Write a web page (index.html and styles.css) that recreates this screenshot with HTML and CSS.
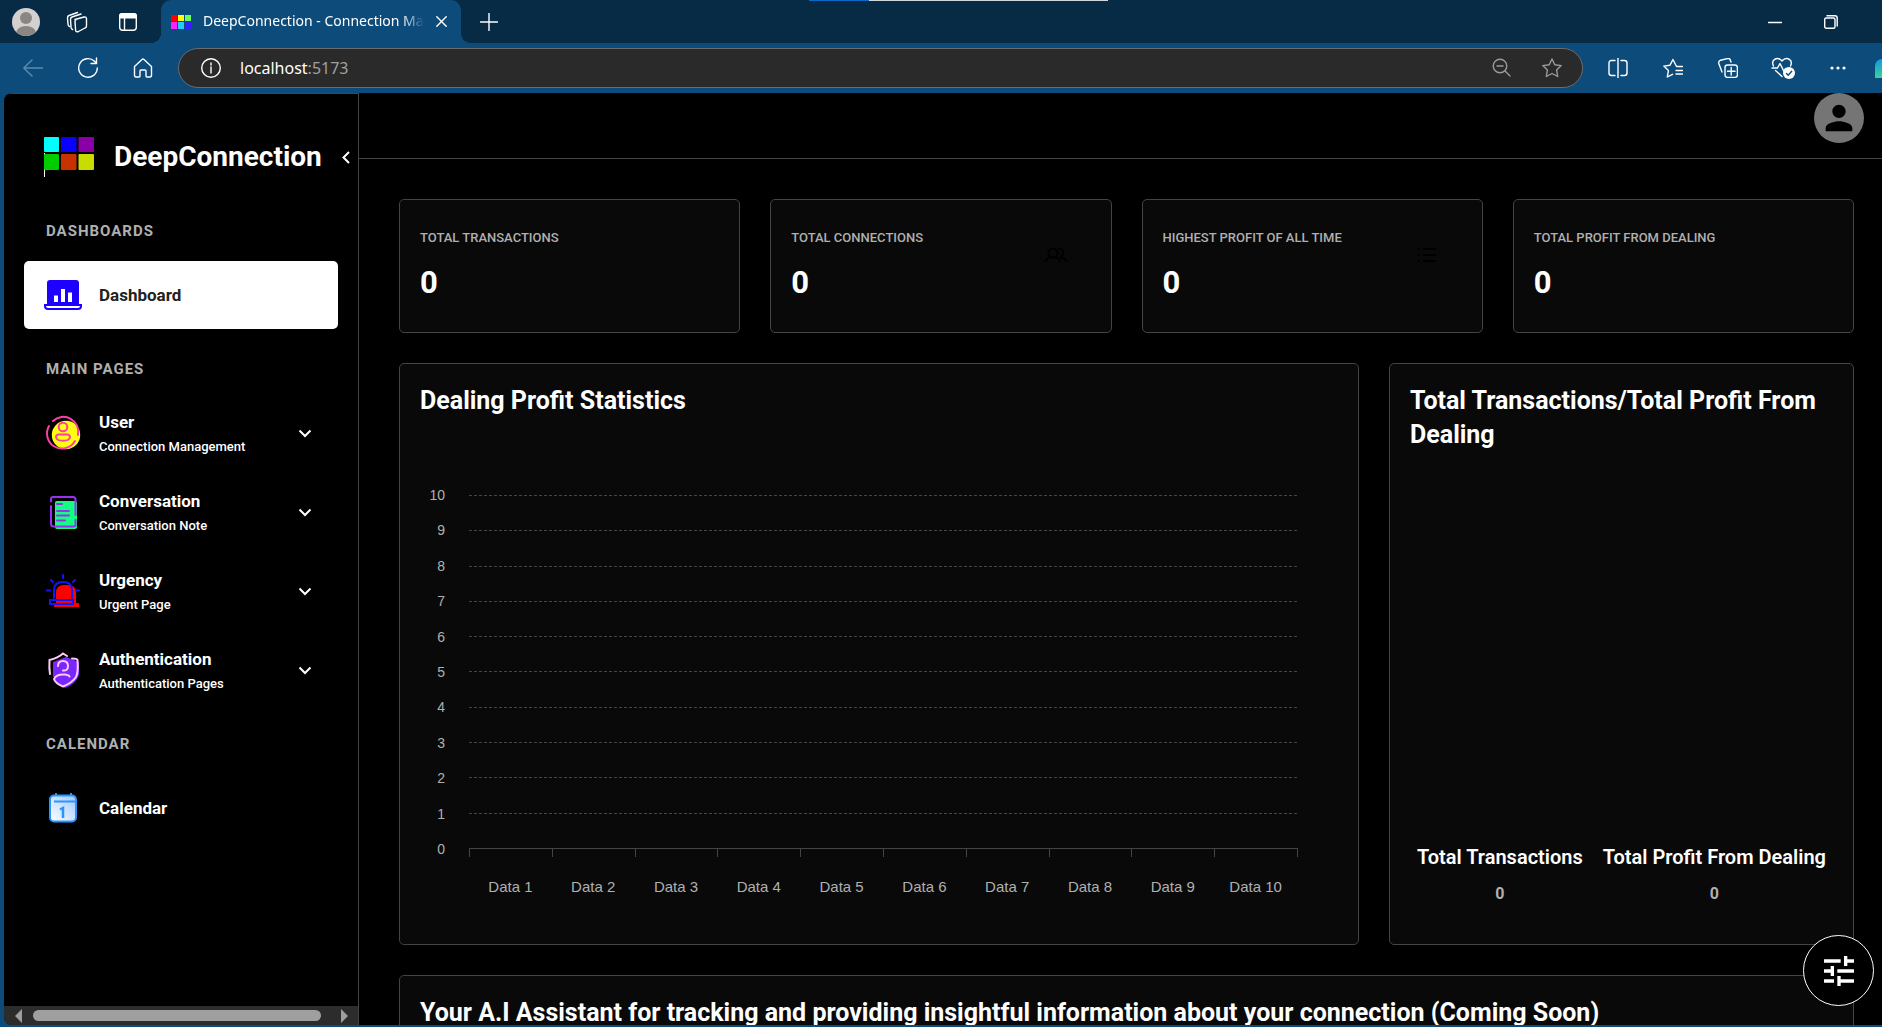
FILE: index.html
```html
<!DOCTYPE html>
<html lang="en">
<head>
<meta charset="utf-8">
<title>DeepConnection - Connection Management</title>
<link rel="stylesheet" href="styles.css">
</head>
<body>
<header class="browser">
  <div class="titlebar">
    <button class="tool" aria-label="Profile"><svg width="28" height="28" viewBox="0 0 28 28"><defs><clipPath id="pc"><circle cx="14" cy="14" r="14"/></clipPath></defs><g clip-path="url(#pc)"><rect width="28" height="28" fill="#d3d1cf"/><circle cx="14" cy="10" r="6" fill="#8a8684"/><ellipse cx="14" cy="25" rx="10" ry="7" fill="#8a8684"/></g></svg></button>
    <button class="tool" aria-label="Workspaces"><svg class="line" width="22" height="22" viewBox="0 0 22 22"><path d="M9 8.500l9-2.500q2.500-.4 2.500 2v7q0 1.500-1.500 2l-6.500 3.500q-2.500 1-2.900-1.200L9 10.500q-.2-1.500 1.200-2zM6.500 18.500Q5 18 5 16L4.500 8.500q0-2 1.500-2.500l9-3M3.500 15.500Q2 15 2 13l-.5-6q0-2 1.500-2.500l8.500-3"/></svg></button>
    <button class="tool" aria-label="Tab actions"><svg width="20" height="20" viewBox="0 0 20 20"><rect x="1.700" y="1.700" width="16.600" height="16.600" rx="3" fill="none" stroke="#fff" stroke-width="1.400"/><path d="M1 6.500V4q0-3 3-3h12q3 0 3 3v2.500z" fill="#fff"/><path d="M6.500 6v12" stroke="#fff" stroke-width="1.400"/></svg></button>
    <div class="tab">
      <svg width="20" height="14" viewBox="0 0 20 14"><path fill="#f00" d="M0 0h6v6H0z"/><path fill="#ff0" d="M7 0h6v6H7z"/><path fill="#6f5" d="M14 0h6v6h-6z"/><path fill="#f2f" d="M0 7h6v7H0z"/><path fill="#2cf" d="M7 7h6v7H7z"/><path fill="#32f" d="M14 7h6v7h-6z"/></svg>
      <span class="tab-title">DeepConnection - Connection Management</span>
      <button class="close" aria-label="Close tab"><svg class="line" width="11" height="11" viewBox="0 0 11 11"><path d="M.8.8l9.400 9.400M10.200.8L.8 10.200"/></svg></button>
    </div>
    <button class="tool new-tab" aria-label="New tab"><svg class="line" width="18" height="18" viewBox="0 0 18 18"><path d="M9 .5v17M.5 9h17"/></svg></button>
    <div class="window-buttons">
      <button class="tool" aria-label="Minimize"><svg class="line" width="14" height="14" viewBox="0 0 14 14"><path d="M.5 7.500h13"/></svg></button>
      <button class="tool" aria-label="Restore"><svg class="line" width="14" height="14" viewBox="0 0 14 14"><rect x=".7" y="3" width="10.300" height="10.300" rx="1.500"/><path d="M3 .8h8q2.200 0 2.200 2.200v8"/></svg></button>
    </div>
    <span class="load-line"></span>
  </div>
  <div class="toolbar">
    <button class="tool dim" aria-label="Back"><svg class="line" width="20" height="18" viewBox="0 0 20 18"><path d="M19.500 9H.8M9 1L.8 9 9 17"/></svg></button>
    <button class="tool" aria-label="Refresh"><svg class="line" width="22" height="22" viewBox="0 0 22 22"><path d="M20.300 11A9.300 9.300 0 1 1 17.500 4.300L19 6M19.500 1v5.500H14"/></svg></button>
    <button class="tool" aria-label="Home"><svg class="line" width="20" height="20" viewBox="0 0 20 20"><path d="M1.500 8.500L9 1.500q1-.9 2 0l7.500 7V17q0 2-1.500 2h-3q-1 0-1-1v-5q0-1-1-1H8q-1 0-1 1v5q0 1-1 1H3q-1.500 0-1.500-2z"/></svg></button>
    <div class="address">
      <svg class="line" width="20" height="20" viewBox="0 0 20 20"><circle cx="10" cy="10" r="9.300"/><path d="M10 9v6M10 5v2"/></svg>
      <span class="url">localhost<span class="port">:5173</span></span>
      <button class="tool gray" aria-label="Zoom"><svg class="line" width="20" height="20" viewBox="0 0 20 20"><circle cx="8" cy="8" r="6.800"/><path d="M13 13l5 5M5 8h6"/></svg></button>
      <button class="tool gray" aria-label="Favorite"><svg class="line" width="20" height="20" viewBox="0 0 20 20"><path d="M10 1l2.800 5.700 6.400.9-4.600 4.500 1.100 6.400-5.700-3-5.700 3 1.100-6.400L.8 7.600l6.400-.9z"/></svg></button>
    </div>
    <button class="tool" aria-label="Split screen"><svg class="line" width="20" height="20" viewBox="0 0 20 20"><path d="M10 0v20M7 2.500H3.500Q1 2.500 1 5v10q0 2.500 2.500 2.500H7M13 2.500h3.500Q19 2.500 19 5v10q0 2.500-2.500 2.500H13"/></svg></button>
    <button class="tool" aria-label="Favorites"><svg class="line" width="20" height="20" viewBox="0 0 20 20"><path d="M19.500 8.500h-6l-3.500-7-3 5.700-6.200.9 4.600 4.500-1.100 6.400 5.200-2.700M13 12.500h6.500M13 16h6.500"/></svg></button>
    <button class="tool" aria-label="Collections"><svg class="line" width="20" height="20" viewBox="0 0 20 20"><rect x="7" y="7" width="12.400" height="12.400" rx="2.500"/><path d="M13.200 9.500v7.500M9.500 13.200h7.500M4 14L.8 5.500Q.3 3 2.500 2.200l7-1.600q2.500-.4 3 1.900l.5 1.500"/></svg></button>
    <button class="tool" aria-label="Browser essentials"><svg class="line" width="24" height="22" viewBox="0 0 24 22"><path d="M2.500 9C-.5 3 6-.5 10 3l1 1 1-1c4-3.500 10.500 0 7.500 6M1 11h5.500l2.500-4.500 4 8 1.500-3M4.500 13.500l6.500 6"/><circle cx="18" cy="16" r="6" fill="#fff" stroke="none"/><path d="M15.500 16.500l1.700 1.700 3.500-4" stroke="#0d4b7b"/></svg></button>
    <button class="tool" aria-label="Settings and more"><svg width="16" height="4" viewBox="0 0 16 4" fill="#fff"><circle cx="2" cy="2" r="1.600"/><circle cx="8" cy="2" r="1.600"/><circle cx="14" cy="2" r="1.600"/></svg></button>
    <button class="copilot" aria-label="Copilot"></button>
  </div>
</header>

<div class="app">
  <aside class="sidebar">
    <div class="brand">
      <svg width="50" height="40" viewBox="0 0 50 40"><path fill="#fff" d="M0 16h1v24H0z"/><rect width="15" height="15" rx="1" fill="#0ff"/><rect x="17" width="15.500" height="15" rx="1" fill="#0a00ff"/><rect x="34.500" width="15.500" height="15" rx="1" fill="#8a00a6"/><rect y="17" width="15" height="16" rx="1" fill="#0c0"/><rect x="17" y="17" width="15.500" height="16" rx="1" fill="#c83200"/><rect x="34.500" y="17" width="15.500" height="16" rx="1" fill="#c8dc00"/></svg>
      <span class="brand-name">DeepConnection</span>
      <button class="collapse" aria-label="Collapse sidebar"><svg width="8" height="13" viewBox="0 0 8 13"><path d="M7 1L1.500 6.500 7 12" fill="none" stroke="#fff" stroke-width="2"/></svg></button>
    </div>
    <nav class="nav">
      <section>
        <h2>Dashboards</h2>
        <a class="item active" href="#"><svg width="38" height="30" viewBox="0 0 38 30"><rect x="3" width="32" height="26" rx="3" fill="#1e00ff"/><path d="M1 25h36v1q0 3-3 3H4q-3 0-3-3z" fill="#fff" stroke="#1e00ff" stroke-width="2"/><path d="M10 15.500h4V22h-4zM17 9h4v13h-4zM24 12.500h4V22h-4z" fill="#fff"/></svg><span class="name">Dashboard</span></a>
      </section>
      <section>
        <h2>Main Pages</h2>
        <a class="item" href="#"><svg width="38" height="38" viewBox="0 0 38 38"><circle cx="22" cy="21" r="14.200" fill="#ffff14"/><g fill="none" stroke="#ff3fa8" stroke-width="2" stroke-linecap="round"><path d="M9 7A15 15 0 0 1 34 21M31 27A15 15 0 0 1 5 12"/><circle cx="19" cy="13" r="4.300"/><path d="M14.500 20.500h9Q26 21 26 23c-.5 5-13.500 5-14 0q0-2 2.500-2.500z"/></g></svg><span class="label"><span class="name">User</span><span class="sub">Connection Management</span></span><svg class="chevron" width="14" height="9" viewBox="0 0 14 9"><path d="M1.500 1.500L7 7l5.500-5.500"/></svg></a>
        <a class="item" href="#"><svg width="38" height="38" viewBox="0 0 38 38"><rect x="11" y="8" width="22" height="28" rx="2" fill="#14ff82"/><path d="M7 8.500V6q0-2 2-2h20q2.500 0 2.500 2.500V22M31.500 27v5q0 1.500-2 1.500H10Q7 33.500 7 31V13M13 11h5M13 18h12M13 22.500h12M13 27.500h8" fill="none" stroke="#9632f0" stroke-width="2" stroke-linecap="round"/></svg><span class="label"><span class="name">Conversation</span><span class="sub">Conversation Note</span></span><svg class="chevron" width="14" height="9" viewBox="0 0 14 9"><path d="M1.500 1.500L7 7l5.500-5.500"/></svg></a>
        <a class="item" href="#"><svg width="38" height="38" viewBox="0 0 38 38"><path d="M12 31V21q0-8 8-8h4q8 0 8 8v10h3v4H10v-4z" fill="red"/><path d="M10 26v-8q0-8 9-8t9 8v8M6 28h23v4H6zM19 6V3M9 10L7 8M29 10l2-2M6 18.500H3M35 18.500h-3" fill="none" stroke="#1414ff" stroke-width="2" stroke-linecap="round"/></svg><span class="label"><span class="name">Urgency</span><span class="sub">Urgent Page</span></span><svg class="chevron" width="14" height="9" viewBox="0 0 14 9"><path d="M1.500 1.500L7 7l5.500-5.500"/></svg></a>
        <a class="item" href="#"><svg width="38" height="38" viewBox="0 0 38 38"><path d="M22 6l13 5v13q-3 9-14 13-9-4-12-12V11z" fill="#7828ff"/><g fill="none" stroke="#ffc8f5" stroke-width="2" stroke-linecap="round"><path d="M6 23q-1-6-.5-14Q14 7 19 2.500l4 2.500M28 7.500q5 0 5.500 1.500 1 12-1.500 17-4 6-13 9.500Q11 32 10 28q2-5 11-4.500 4 .5 4.500 2"/><path d="M14 15q0-5 5-5t5 5-5 4.500"/></g></svg><span class="label"><span class="name">Authentication</span><span class="sub">Authentication Pages</span></span><svg class="chevron" width="14" height="9" viewBox="0 0 14 9"><path d="M1.500 1.500L7 7l5.500-5.500"/></svg></a>
      </section>
      <section>
        <h2>Calendar</h2>
        <a class="item" href="#"><svg width="38" height="38" viewBox="0 0 38 38"><defs><linearGradient id="cg" x1="1" x2="0" y2="1"><stop offset="0" stop-color="#a0c8ff"/><stop offset="1" stop-color="#fff"/></linearGradient></defs><rect x="6" y="6.500" width="26" height="26" rx="4" fill="url(#cg)" stroke="#2896ff" stroke-width="2"/><path d="M12 4v3M27 4v3M10 12.500h22" fill="none" stroke="#2896ff" stroke-width="2"/><path d="M16 20.500l3-1.500v10" fill="none" stroke="#2896ff" stroke-width="2.500"/></svg><span class="name">Calendar</span></a>
      </section>
    </nav>
    <div class="scrollbar"><span class="arrow left"></span><span class="thumb"></span><span class="arrow right"></span></div>
  </aside>

  <div class="content">
    <div class="topbar"><button class="avatar" aria-label="Account"><svg width="40" height="40" viewBox="0 0 24 24"><path d="M12 12c2.210 0 4-1.790 4-4s-1.790-4-4-4-4 1.790-4 4 1.790 4 4 4zm0 2c-2.670 0-8 1.340-8 4v2h16v-2c0-2.660-5.330-4-8-4z"/></svg></button></div>
    <main class="board">
      <div class="card stat"><div><h3>Total Transactions</h3><p>0</p></div></div>
      <div class="card stat"><div><h3>Total Connections</h3><p>0</p></div><svg class="mark" width="24" height="16" viewBox="0 0 24 16"><circle cx="9" cy="6" r="4.500"/><path d="M1 15q2-5 8-5t7 5M14 1.500q6 0 5 5-.5 3-3 4 5 0 7 4.500"/></svg></div>
      <div class="card stat"><div><h3>Highest Profit of All Time</h3><p>0</p></div><svg class="mark" width="24" height="16" viewBox="0 0 24 16"><path d="M3 2h2M8 2h13M3 8h2M8 8h13M3 14h2M8 14h13"/></svg></div>
      <div class="card stat"><div><h3>Total Profit From Dealing</h3><p>0</p></div></div>

      <section class="card chart-card">
        <h2>Dealing Profit Statistics</h2>
        <div class="chart">
          <div class="y-axis"><span>10</span><span>9</span><span>8</span><span>7</span><span>6</span><span>5</span><span>4</span><span>3</span><span>2</span><span>1</span><span>0</span></div>
          <div class="plot"><i></i><i></i><i></i><i></i><i></i><i></i><i></i><i></i><i></i><i></i></div>
          <div class="x-axis"><span>Data 1</span><span>Data 2</span><span>Data 3</span><span>Data 4</span><span>Data 5</span><span>Data 6</span><span>Data 7</span><span>Data 8</span><span>Data 9</span><span>Data 10</span></div>
        </div>
      </section>
      <section class="card ratio-card">
        <h2>Total Transactions/Total Profit From Dealing</h2>
        <dl class="totals">
          <div><dt>Total Transactions</dt><dd>0</dd></div>
          <div><dt>Total Profit From Dealing</dt><dd>0</dd></div>
        </dl>
      </section>
      <section class="card assistant">
        <h2>Your A.I Assistant for tracking and providing insightful information about your connection (Coming Soon)</h2>
      </section>
    </main>
  </div>
</div>
<button class="fab" aria-label="Theme settings"><svg width="40" height="40" viewBox="0 0 24 24" fill="#fff"><path d="M3 17v2h6v-2H3zM3 5v2h10V5H3zm10 16v-2h8v-2h-8v-2h-2v6h2zM7 9v2H3v2h4v2h2V9H7zm14 4v-2H11v2h10zm-6-4h2V7h4V5h-4V3h-2v6z"/></svg></button>
</body>
</html>
```
FILE: styles.css
```css
* { box-sizing: border-box; }
body {
  margin: 0;
  height: 100vh;
  display: flex;
  flex-direction: column;
  overflow: hidden;
  background: #0d4b7b;
  color: #fff;
  font-family: Roboto, "Liberation Sans", sans-serif;
}
button { padding: 0; border: 0; background: none; color: inherit; }
svg { display: block; flex: none; }
h2, h3, p, dl, dd { margin: 0; }

/* browser frame */
.browser { flex: none; font-family: "Noto Sans", "Open Sans", sans-serif; }
.line { fill: none; stroke: currentColor; stroke-width: 1.4; stroke-linecap: round; stroke-linejoin: round; }
.tool { width: 36px; height: 36px; flex: none; display: grid; place-items: center; }
.dim { color: #5c8ab0; }
.gray { color: #9a9a9a; }
.titlebar {
  position: relative;
  height: 43px;
  display: flex;
  align-items: center;
  gap: 15px;
  padding-left: 8px;
  background: #072a45;
}
.tab {
  position: relative;
  width: 300px;
  height: 43px;
  display: flex;
  align-items: center;
  padding: 0 14px 0 10px;
  background: #0d4b7b;
  border-radius: 10px 10px 0 0;
}
.tab::before, .tab::after {
  content: "";
  position: absolute;
  bottom: 0;
  width: 10px;
  height: 10px;
}
.tab::before { right: 100%; background: radial-gradient(circle at 0 0, transparent 10px, #0d4b7b 10px); }
.tab::after { left: 100%; background: radial-gradient(circle at 100% 0, transparent 10px, #0d4b7b 10px); }
.tab-title {
  flex: 1;
  margin: 0 12px;
  padding-bottom: 2px;
  overflow: hidden;
  white-space: nowrap;
  font-size: 14px;
  -webkit-mask-image: linear-gradient(90deg, #000 90%, transparent);
  mask-image: linear-gradient(90deg, #000 90%, transparent);
}
.new-tab { margin-left: -5px; }
.window-buttons { margin-left: auto; display: flex; gap: 20px; padding-right: 33px; }
.load-line {
  position: absolute;
  top: 0;
  left: 43%;
  width: 299px;
  height: 1px;
  background: linear-gradient(90deg, #0b69c7 60px, #cfd8e0 60px);
}
.toolbar { height: 50px; display: flex; align-items: center; gap: 19px; padding-left: 15px; }
.address {
  flex: 1;
  height: 40px;
  margin: 0 -2px;
  display: flex;
  align-items: center;
  gap: 14px;
  padding: 0 12px 0 22px;
  background: #2a2a2a;
  border: 1px solid #6b6b6b;
  border-radius: 20px;
}
.url { flex: 1; padding-left: 5px; font-size: 16px; }
.port { color: #a0a0a0; }
.copilot {
  width: 7px;
  height: 19px;
  border-radius: 9px 0 0 0;
  background: linear-gradient(#1496e6, #3cd296);
}

/* application */
.app { flex: 1; min-height: 0; display: flex; margin: 0 0 2px 4px; background: #000; border-radius: 8px 0 0 8px; overflow: hidden; }
.sidebar {
  width: 355px;
  flex: none;
  display: flex;
  flex-direction: column;
  border: 1px solid #444;
  border-width: 1px 1px 0 0;
}
.brand { display: flex; align-items: center; gap: 20px; padding: 43px 9px 0 40px; }
.brand-name { flex: 1; font-size: 28px; line-height: 40px; font-weight: 700; }
.nav { flex: 1; padding: 14px 20px 0; }
.nav h2 {
  margin: 30px 0 20px 22px;
  font-size: 15px;
  line-height: 20px;
  font-weight: 700;
  letter-spacing: 1px;
  text-transform: uppercase;
  color: #b0b0b0;
}
.item {
  height: 68px;
  margin-bottom: 11px;
  display: flex;
  align-items: center;
  gap: 17px;
  padding: 0 26px 0 20px;
  border-radius: 5px;
  color: #fff;
  text-decoration: none;
}
.item:last-child { margin-bottom: 0; }
.active { background: #fff; color: #222; }
.name { display: block; font-size: 17px; line-height: 24px; font-weight: 700; }
.label { flex: 1; padding-top: 3px; }
.sub { display: block; font-size: 13px; line-height: 26px; font-weight: 500; }
.chevron path { fill: none; stroke: #fff; stroke-width: 2; }
.scrollbar { height: 19px; display: flex; align-items: center; justify-content: space-between; padding: 0 10px 0 11px; background: #2c2c2c; }
.thumb { flex: 1; height: 11px; margin: 0 20px 0 11px; border-radius: 6px; background: #9f9f9f; }
.arrow { border: 7px solid transparent; }
.left { border-right-color: #9f9f9f; border-left: 0; }
.right { border-left-color: #9f9f9f; border-right: 0; }

.content { flex: 1; min-width: 0; }
.topbar { height: 66px; padding-right: 18px; border-bottom: 1px solid #444; }
.avatar { width: 50px; height: 50px; margin-left: auto; display: grid; place-items: center; border-radius: 50%; background: #757575; }
.board { display: grid; grid-template-columns: repeat(12, 1fr); gap: 30px; padding: 40px 28px 40px 40px; }
.card { background: #090909; border: 1px solid #444; border-radius: 5px; padding: 20px; }
.card h2 { font-size: 25px; line-height: 34px; font-weight: 700; }
.stat { grid-column: span 3; height: 134px; display: flex; justify-content: space-between; padding: 28px 43px 0 20px; }
.stat h3 { font-size: 13px; line-height: 20px; font-weight: 500; text-transform: uppercase; color: #b0b0b0; }
.stat p { margin-top: 15px; font-size: 31px; line-height: 40px; font-weight: 700; }
.mark { margin-top: 19px; fill: none; stroke: #000; stroke-width: 2; }

.chart-card { grid-column: span 8; height: 582px; }
.chart {
  display: grid;
  grid-template: 354px auto / 24px 1fr;
  column-gap: 24px;
  margin: 77px 40px 0 1px;
  font-family: "Liberation Sans", sans-serif;
  color: #b0b0b0;
}
.y-axis { display: flex; flex-direction: column; justify-content: space-between; margin: -10px 0; font-size: 14px; line-height: 20px; text-align: right; }
.plot { display: flex; flex-direction: column; border-bottom: 1px solid #444; }
.plot i { flex: 1; background: repeating-linear-gradient(90deg, #444 0 3px, transparent 3px 5px) top / 100% 1px no-repeat; }
.x-axis { grid-column: 2; display: grid; grid-template-columns: repeat(10, 1fr); border-right: 1px solid #444; height: 8px; font-size: 15px; line-height: 20px; text-align: center; }
.x-axis span { padding-top: 28px; background: linear-gradient(#444, #444) left top / 1px 8px no-repeat; white-space: nowrap; }

.ratio-card { grid-column: span 4; display: flex; flex-direction: column; }
.totals { display: flex; justify-content: center; gap: 20px; margin: auto 0 19px; text-align: center; }
.totals dt { font-size: 20px; line-height: 24px; font-weight: 600; white-space: nowrap; }
.totals dd { margin-top: 14px; font-size: 16px; line-height: 22px; font-weight: 700; color: #b0b0b0; }
.assistant { grid-column: 1 / -1; height: 200px; }

.fab {
  position: fixed;
  right: 8px;
  bottom: 21px;
  width: 71px;
  height: 71px;
  display: grid;
  place-items: center;
  border: 1px solid #fff;
  border-radius: 50%;
  background: #000;
}
```
